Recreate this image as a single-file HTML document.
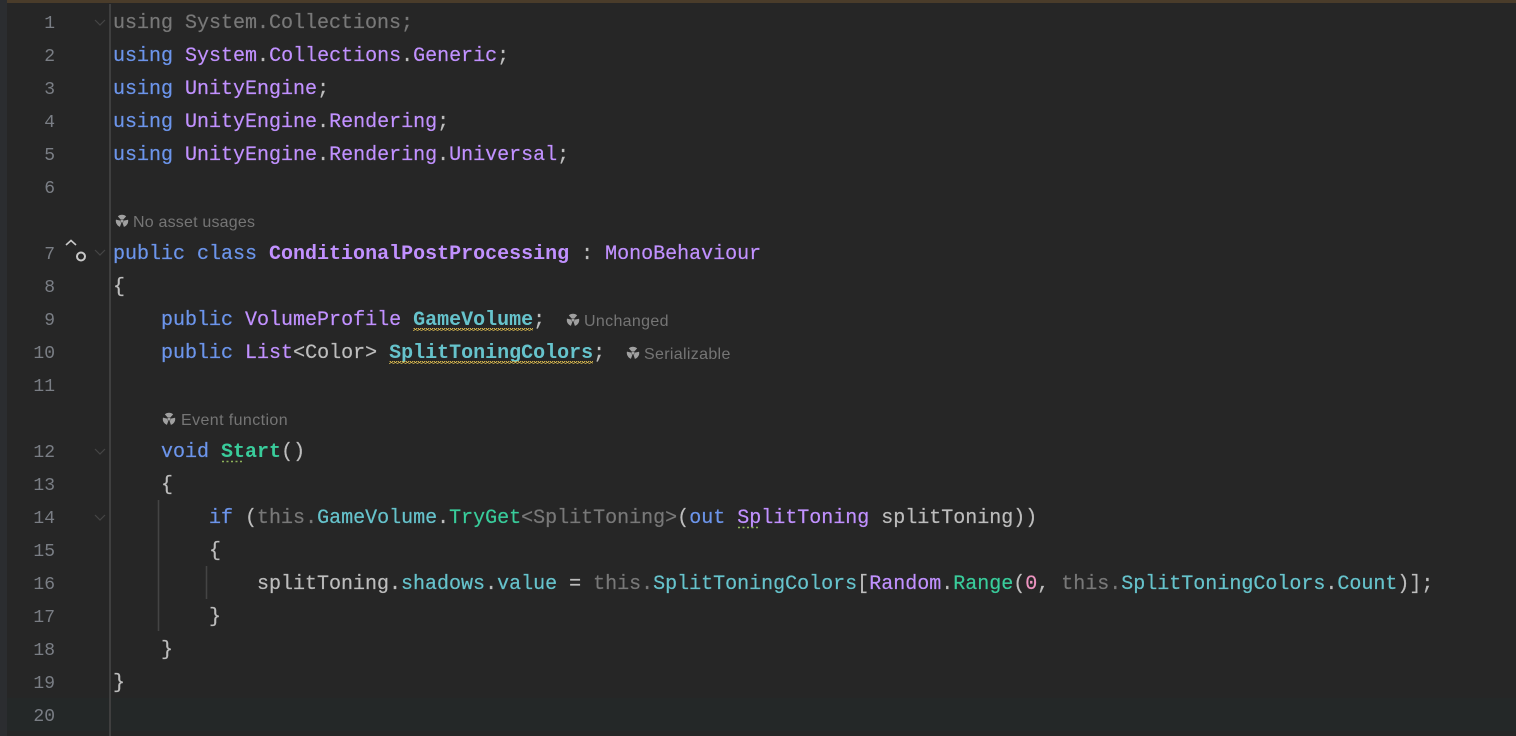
<!DOCTYPE html>
<html><head><meta charset="utf-8"><style>
html,body{margin:0;padding:0;width:1516px;height:736px;overflow:hidden;background:#262626}
#top{position:absolute;left:7px;top:0;width:1509px;height:3px;background:#4a3c2a}
#left{position:absolute;left:0;top:0;width:7px;height:736px;background:#2b2d30}
#cur{position:absolute;left:7px;top:698px;width:1509px;height:33px;background:#242828}
#div{position:absolute;left:109px;top:4px;width:2px;height:732px;background:#3f3f3f}
.l{position:absolute;left:113px;margin-top:1px;height:33px;font:20px/33px "Liberation Mono",monospace;white-space:pre;color:#bdbdbd;-webkit-text-stroke:.2px}
.n{position:absolute;left:14px;width:41px;margin-top:2px;text-align:right;font:18px/33px "Liberation Mono",monospace;color:#7a7e85}
.h{position:absolute;margin-top:2px;font:16px/20px "Liberation Sans",sans-serif;color:#757575;white-space:pre;letter-spacing:.33px}
.k{color:#6c95eb}.t{color:#c191ff}.f{color:#66c3cc}.m{color:#39cc9b}.d{color:#787878}.z{color:#ed94c0}
.b{font-weight:bold;-webkit-text-stroke:0}
.g{position:absolute;left:0;top:0}
</style></head><body>
<div id="left"></div><div id="top"></div><div id="cur"></div><div id="div"></div>
<div class="n" style="top:6px">1</div>
<div class="n" style="top:39px">2</div>
<div class="n" style="top:72px">3</div>
<div class="n" style="top:105px">4</div>
<div class="n" style="top:138px">5</div>
<div class="n" style="top:171px">6</div>
<div class="n" style="top:237px">7</div>
<div class="n" style="top:270px">8</div>
<div class="n" style="top:303px">9</div>
<div class="n" style="top:336px">10</div>
<div class="n" style="top:369px">11</div>
<div class="n" style="top:435px">12</div>
<div class="n" style="top:468px">13</div>
<div class="n" style="top:501px">14</div>
<div class="n" style="top:534px">15</div>
<div class="n" style="top:567px">16</div>
<div class="n" style="top:600px">17</div>
<div class="n" style="top:633px">18</div>
<div class="n" style="top:666px">19</div>
<div class="n" style="top:699px">20</div>
<div class="l d" style="top:6px">using System.Collections;</div>
<div class="l" style="top:39px"><span class="k">using</span> <span class="t">System</span>.<span class="t">Collections</span>.<span class="t">Generic</span>;</div>
<div class="l" style="top:72px"><span class="k">using</span> <span class="t">UnityEngine</span>;</div>
<div class="l" style="top:105px"><span class="k">using</span> <span class="t">UnityEngine</span>.<span class="t">Rendering</span>;</div>
<div class="l" style="top:138px"><span class="k">using</span> <span class="t">UnityEngine</span>.<span class="t">Rendering</span>.<span class="t">Universal</span>;</div>
<div class="l" style="top:237px"><span class="k">public class</span> <span class="t b">ConditionalPostProcessing</span> : <span class="t">MonoBehaviour</span></div>
<div class="l" style="top:270px">{</div>
<div class="l" style="top:303px">    <span class="k">public</span> <span class="t">VolumeProfile</span> <span class="f b">GameVolume</span>;</div>
<div class="l" style="top:336px">    <span class="k">public</span> <span class="t">List</span>&lt;Color&gt; <span class="f b">SplitToningColors</span>;</div>
<div class="l" style="top:435px">    <span class="k">void</span> <span class="m b">Start</span>()</div>
<div class="l" style="top:468px">    {</div>
<div class="l" style="top:501px">        <span class="k">if</span> (<span class="d">this</span><span class="d">.</span><span class="f">GameVolume</span>.<span class="m">TryGet</span><span class="d">&lt;SplitToning&gt;</span>(<span class="k">out</span> <span class="t">SplitToning</span> splitToning))</div>
<div class="l" style="top:534px">        {</div>
<div class="l" style="top:567px">            splitToning.<span class="f">shadows</span>.<span class="f">value</span> = <span class="d">this.</span><span class="f">SplitToningColors</span>[<span class="t">Random</span>.<span class="m">Range</span>(<span class="z">0</span>, <span class="d">this.</span><span class="f">SplitToningColors</span>.<span class="f">Count</span>)];</div>
<div class="l" style="top:600px">        }</div>
<div class="l" style="top:633px">    }</div>
<div class="l" style="top:666px">}</div>
<div class="h" style="left:133px;top:211px;letter-spacing:.2px">No asset usages</div>
<div class="h" style="left:584px;top:310px">Unchanged</div>
<div class="h" style="left:644px;top:343px">Serializable</div>
<div class="h" style="left:181px;top:409px;letter-spacing:.4px">Event function</div>
<svg class="g" width="1516" height="736" viewBox="0 0 1516 736" fill="none">
<defs>
<pattern id="w" width="4" height="3" patternUnits="userSpaceOnUse"><path d="M0 2.5L1 .7L2 .7L3 2.5L4 2.5" stroke="#d9b94f" stroke-width="1"/></pattern>
<g id="r"><circle cx="0" cy="0" r="1.5" fill="#a0a0a0"/><circle cx="0" cy="0" r="4" stroke="#a0a0a0" stroke-width="4.4" stroke-dasharray="5.8 2.58" transform="rotate(-132)"/></g>
</defs>
<rect x="413" y="328" width="120" height="3" fill="url(#w)"/>
<rect x="389" y="361" width="204" height="3" fill="url(#w)"/>
<path d="M222 461.500h21" stroke="#8fb35a" stroke-width="1.500" stroke-dasharray="2 2.500"/>
<path d="M738 527.500h21" stroke="#8fb35a" stroke-width="1.500" stroke-dasharray="2 2.500"/>
<path d="M95 20l5 5 5-5M95 250l5 5 5-5M95 449l5 5 5-5M95 515l5 5 5-5" stroke="#454545" stroke-width="1.200"/>
<path d="M66 245l5-4.500 5 4.500" stroke="#c8c8c8" stroke-width="1.600"/>
<circle cx="81" cy="256.500" r="4" stroke="#c8c8c8" stroke-width="2"/>
<path d="M158.500 500v131M206.500 566v33" stroke="#444444" stroke-width="1.500"/>
<use href="#r" x="122" y="221"/><use href="#r" x="573" y="320"/><use href="#r" x="633" y="353"/><use href="#r" x="169" y="419"/>
</svg>
</body></html>
